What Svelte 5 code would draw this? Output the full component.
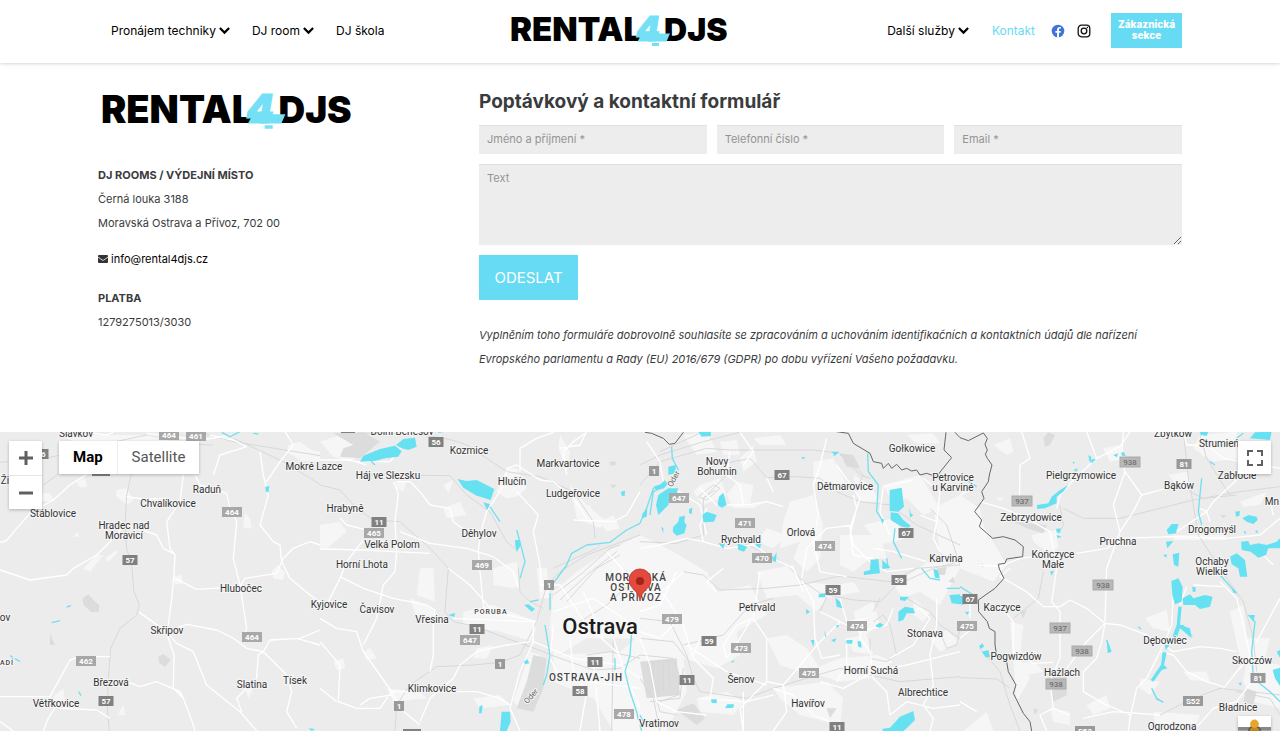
<script>
  const fields = [
    { id: 'name', label: 'Jméno a příjmení *', type: 'text' },
    { id: 'phone', label: 'Telefonní číslo *', type: 'tel' },
    { id: 'email', label: 'Email *', type: 'email' }
  ];

  // Each tile covers 960 x 918 drawing units, placed side by side.
  const tiles = [
    {
      x: 0,
      town: [
        'M350 195L380 190 400 225 380 240 348 212Z', 'M230 170L255 160 262 185 240 188Z', 'M815 440L835 420 855 445 848 465 820 460Z',
        'M865 60L900 50 935 75 960 80V110L900 105 860 80Z', 'M735 265L750 280 755 310 730 308Z', 'M520 455L545 450 548 475 525 480Z',
        'M315 400L350 375 355 380 325 412Z', 'M250 430L290 390 310 390 270 440Z', 'M218 335L232 322 240 335Z', 'M165 810L190 790 195 830 150 850Z',
        'M352 870L372 840 375 870Z', 'M180 30H430L560 60 400 90 240 60Z', 'M735 790L760 790 745 820Z', 'M100 205L150 205 165 228 100 230Z'
      ],
      wood: ['M248 520L265 508 285 530 298 540 296 560 275 562 250 540Z', 'M475 695L490 687 512 705 495 725 478 715Z', 'M150 625L158 645 165 660 150 660Z'],
      rail: ['M600 22L700 50 960 92', 'M700 40L850 110 960 178', 'M0 112Q150 108 300 60L440 30', 'M130 180L240 100 400 50 640 60', 'M398 130L380 210 375 300 380 370 395 420 402 500 418 540 410 570 360 610 332 670 325 760 322 850 328 918'],
      road: [
        'M0 352L18 348 50 310 90 265 160 225 210 180 250 155 290 120', 'M0 435L90 465 200 450 220 430 290 390 330 350 375 300', 'M380 215L430 222 500 220',
        'M550 150L540 230 500 290 510 370 525 390 522 450 515 520 505 600', 'M525 460L590 493 720 485 735 460 830 445 850 400 880 370 930 350 960 360',
        'M380 300L470 330 490 370 520 385', 'M418 562L500 620 530 655 580 680 620 780 720 860 770 918', 'M500 620L560 598 650 615 700 640 740 670 790 680 810 645 900 640 960 615',
        'M585 150L600 180 680 205 690 250 710 290 700 400 720 480 740 610 730 640', 'M780 80L790 150 805 210 780 300 820 350 840 360 845 410 870 460 930 510 960 530',
        'M640 150L660 90 740 65 700 45 630 30', 'M855 20L880 60 840 110 800 170', 'M500 625L522 690 520 790 550 820 580 900 585 918', 'M0 815H150L180 760 210 705 240 695 330 695',
        'M150 815L180 850 290 855 330 880', 'M170 840L145 880 130 918', 'M380 770L420 785 470 770 540 800 550 820', 'M790 680L775 690 770 760 710 820 725 860', 'M790 680L860 750 875 800 860 860 890 910',
        'M440 25L600 45 700 30', 'M0 890L40 918', 'M260 22L320 30 340 22', 'M890 640L960 660'
      ],
      river: ['M665 22L690 35 720 20', 'M155 593L180 587', 'M200 546L213 542', 'M30 692L60 710', 'M760 25L775 27', 'M236 800L243 812'],
      lake: ['M796 185L808 183 805 203 797 198Z', 'M925 910L945 912 935 918Z'],
      border: []
    },
    {
      x: 320,
      town: [
        'M0 50L60 30 110 20 170 60 90 110 40 95Z', 'M370 180L400 165 385 205Z', 'M560 130L590 130 620 190 590 215 560 220 530 200Z', 'M520 430L590 410 600 480 580 490 520 480Z', 'M430 560L520 540 650 590 640 650 540 620 430 600Z',
        'M300 430L340 430 345 530 290 510Z', 'M370 250L420 230 440 270 380 280Z', 'M750 180L800 240 860 290 840 310 770 280Z', 'M650 430L680 430 690 520 660 520Z', 'M700 500L770 440 860 380 960 330V640L800 640 700 700 690 600Z',
        'M720 30L750 80 740 140 715 70Z', 'M840 290L880 270 900 310 860 320Z', 'M770 250L810 240 830 280 780 290Z', 'M130 680L150 670 170 700 140 705Z', 'M40 710L70 700 75 730 50 735Z', 'M270 520L340 550 345 590 290 580Z',
        'M460 820L540 810 570 840 480 850Z', 'M200 790L300 800 320 820 220 830Z', 'M700 690L900 680 960 630V918H880L820 820 700 770Z', 'M0 300L60 290 80 320 20 370 0 370Z', 'M225 170L260 170 250 200 230 190Z', 'M630 680L660 690 640 760 600 850 580 830Z', 'M470 670L520 660 500 700 460 700Z'
      ],
      wood: ['M40 25L130 22 180 50 120 100 60 95 70 70 100 60Z', 'M640 690L680 700 670 790 640 860 590 850 620 770Z', 'M868 112L885 108 888 120 872 122Z', 'M870 180L892 178 880 190Z'],
      rail: [
        'M110 25Q350 20 440 60L560 140 660 155 760 200 820 290 825 340', 'M140 150L390 152 440 210 510 260 560 350 595 380', 'M0 180L60 195 110 250 160 285 240 290 330 370 385 430 375 560 400 590 470 605 560 640 630 665',
        'M225 918L230 840 270 780 350 725 460 720 540 712 600 690 650 590 680 480 720 440 800 390 960 330', 'M595 430L600 500 630 530 670 550', 'M700 510L780 450 870 370 900 360', 'M720 525L800 450 890 380',
        'M740 530L830 430 900 390', 'M630 665L720 700 820 735 900 730 960 690', 'M780 590L860 540 960 450', 'M800 690L870 680 960 700', 'M880 640L875 918', 'M700 430L830 370 840 360'
      ],
      road: [
        'M220 170L235 205 225 290 230 380 225 440', 'M230 170L270 170 300 200 330 240 390 250 400 290 440 320', 'M110 110L210 110 250 60', 'M0 105L90 105 140 120', 'M560 140L545 190 500 260 480 330 475 380 480 440 490 540 500 570',
        'M240 320L330 355 440 370 520 395 580 440 595 490', 'M560 130L590 120 660 165 700 170 760 220 800 280', 'M590 200L655 270 640 320 660 420 665 500', 'M600 140L600 70 650 40 700 22', 'M740 150L730 80 760 50 800 22',
        'M60 280L80 300 160 320', 'M0 372L130 375 330 385', 'M130 345L80 410 60 460 20 540', 'M60 455L130 490 220 520 320 540 345 555 340 600', 'M225 440L190 480 170 580 130 660', 'M0 580L50 610 110 620 130 680 180 750 215 800 240 850 300 900',
        'M215 800L330 800 470 800 540 820 570 840', 'M340 600L340 690 330 740', 'M300 890L330 820 400 760 420 720 470 680 560 660 630 650', 'M385 430L450 480 520 560 650 590', 'M400 580L640 590', 'M640 590L640 650 600 740 570 850 600 918', 'M800 20L780 60 720 70',
        'M960 200L920 270 880 290 760 285', 'M660 480L720 480 800 600 900 690', 'M700 560L820 520 940 600', 'M860 380L950 480', 'M880 400L960 500', 'M640 650L760 700 900 720 960 760', 'M750 640L760 740 800 800 780 918', 'M700 600L690 700 720 760 800 770 960 790',
        'M820 700L840 918', 'M0 650L60 720 55 830 110 850 180 850 215 800', 'M0 790L50 830', 'M120 840L150 820 215 810', 'M790 500L850 640', 'M880 640L920 760 960 850'
      ],
      river: ['M590 315L605 370 615 410 600 460', 'M510 245L540 290', 'M960 295L920 315 870 352 800 360 755 385 740 420 700 475', 'M690 505L690 555', 'M675 600L690 690 680 750 670 780', 'M935 620L930 690 915 740 930 800 950 860 955 885', 'M885 700L885 735', 'M630 530L655 525', 'M150 105L165 120', 'M355 22L368 20'],
      lake: ['M120 110L130 92 180 72 225 62 245 78 235 95 195 100 165 108Z', 'M228 60L250 42 285 38 290 65 265 75 245 70Z', 'M412 162L440 168 470 165 523 192 512 225 470 212 430 188Z', 'M490 232L510 238 502 255Z', 'M585 345L600 345 602 362 590 380 586 362Z', 'M613 540L625 538 645 552 635 560Z', 'M903 200L915 197 914 213 905 212Z', 'M478 845L488 840 485 865 477 865Z', 'M545 860L570 860 572 890 560 918H540Z', 'M385 570L405 564 403 576Z', 'M612 710L622 703 628 715 615 718Z'],
      border: []
    },
    {
      x: 640,
      town: [
        'M130 30L200 20 230 80 170 90Z', 'M180 180L240 160 260 210 190 240 160 200Z', 'M300 100L340 60 350 110 310 140Z', 'M290 170L340 180 330 240 380 230 340 250 280 250 260 210Z', 'M450 230L520 210 550 300 540 400 500 440 460 400 480 350 420 370 430 290Z', 'M0 330L100 380 200 440 230 500 330 480 380 570 290 620 300 690 230 730 130 700 0 640Z',
        'M0 630L100 650 130 690 140 800 80 918H0Z', 'M350 440L460 420 480 470 590 480 640 470 660 500 560 520 530 560 470 510 380 520Z', 'M520 110L580 100 620 180 570 200 520 170Z', 'M600 330L720 330 740 400 690 400 640 440 600 420Z', 'M730 180L840 150 900 250 850 270 800 220 760 240Z',
        'M820 440L880 400 960 370V430L900 540 840 500 790 520 760 480Z', 'M380 640L440 630 500 670 540 730 480 740 420 720Z', 'M500 740L600 700 710 690 760 710 690 760 600 770Z', 'M400 790L560 770 610 820 600 900 480 870 420 820Z', 'M170 820L260 800 310 830 280 870 180 860Z', 'M640 560L700 530 720 600 660 640Z', 'M880 250L960 210V430L900 380Z',
        'M620 640L680 630 700 690 640 680Z', 'M820 520L870 560 850 590 820 570Z', 'M380 310L440 330 400 370 350 350Z', 'M240 50L290 45 300 90 250 90Z', 'M670 300L760 280 800 340 720 360Z', 'M640 150L690 180 720 230 660 230Z', 'M190 620L260 600 300 680 240 700 200 680Z', 'M870 640L920 615 958 650 900 680Z', 'M340 40L420 30 440 60 360 60Z', 'M800 30L880 25 900 55 830 55Z'
      ],
      wood: ['M110 855L160 835 195 880 170 900Z', 'M0 710L110 700 120 810 20 820Z', 'M890 430L920 425 915 450 895 450Z', 'M600 85L640 90 660 130 620 125Z', 'M925 470L940 455 945 475Z', 'M560 850L590 850 570 880Z'],
      rail: [
        'M0 120L60 90 190 50 300 22', 'M0 180L60 110 200 70 270 75 520 75 600 85 660 150 690 160', 'M230 120L330 100 380 158 470 155 540 160 590 200 660 230 750 240 830 300 960 360', 'M0 350L110 355 190 330 190 220 260 150', 'M300 350L390 390 440 420 485 465 540 505 640 525 720 530 770 480 880 430 960 410',
        'M130 440L190 450 240 495 380 490 480 480 590 455 620 455 750 470 830 430 960 420', 'M130 660L180 648 250 630 330 540 400 520', 'M0 580L90 590 140 690 160 760 180 800 320 820 400 790 600 730 780 770 960 755', 'M800 520L870 560 900 600 960 640', 'M10 735L30 710 100 705 115 740 115 810 60 830',
        'M40 710V800', 'M55 710V805', 'M70 708V800', 'M85 708L90 790', 'M30 830L120 820 130 730', 'M20 720L60 860 110 870', 'M0 760L40 820 60 918', 'M175 215L220 180 240 190 200 225 175 215', 'M190 220L225 195', 'M0 690L100 700', 'M185 22L60 80', 'M0 640L100 650 140 700',
        'M600 90L630 95 640 120 670 150 660 170', 'M700 590L730 570 750 600 770 690 740 710 690 700 690 640', 'M900 620L920 670 950 660 960 610', 'M560 515L540 560 580 580', 'M870 250L920 300 960 420', 'M720 520L700 560'
      ],
      road: [
        'M0 370L60 360 140 340 190 350 260 370 340 360 400 400', 'M20 50L60 110 70 170 180 240 200 330', 'M180 190L230 240 320 240 380 230 430 245', 'M270 80L260 150 300 180 310 240', 'M380 158L400 200', 'M560 40L540 120 520 180 535 270 520 350 540 440 620 455', 'M200 250L180 300 190 350', 'M640 210L650 250 630 330 640 390 700 400',
        'M590 120L660 220 630 310 640 360 700 420 740 440 820 430', 'M640 300L560 310 500 370 485 460', 'M485 465L520 530 525 640 545 700 600 690', 'M360 440L350 510 340 580 290 600 250 660 260 700', 'M400 400L460 430 490 500', 'M340 580L380 640 380 770 300 850 310 918', 'M380 770L430 780 540 650 600 590', 'M665 580L660 640 690 680 700 760 740 800 750 870',
        'M960 680L880 700 800 720 700 740 610 790 540 770', 'M400 790L460 810 520 870 570 890', 'M0 450L80 520 130 600 160 700 220 760 210 820', 'M130 440L80 490 0 520', 'M250 430L200 470 230 500', 'M140 660L200 700 260 740 380 780', 'M540 560L660 620 740 600 760 550', 'M890 520L890 600 870 690 880 780 850 840 880 880 870 918',
        'M840 270L890 290 880 340 900 380', 'M700 370L760 380 860 410', 'M820 165L730 185 720 260 750 330', 'M850 160L900 200 890 290', 'M0 640L30 720 50 830 110 860 200 870', 'M180 640L160 690', 'M600 520L620 590 680 580', 'M960 840L880 850 800 830 750 870', 'M0 560L60 540 110 440', 'M260 700L300 640 330 590', 'M620 640L620 720 590 770',
        'M300 22L340 80 310 120', 'M100 600L60 640 0 620', 'M180 820L320 830 400 810', 'M310 800V918', 'M430 780L440 860 400 918', 'M750 700L820 660 870 580 840 550 800 560'
      ],
      river: ['M95 65L97 100 115 135 90 170 40 190 20 250 0 295', 'M683 85L685 140 715 180 710 260 730 290', 'M765 310L760 350 785 400', 'M845 430L870 460 900 465', 'M920 490H960', 'M740 400L745 430', 'M0 870L15 900', 'M0 900L5 918', 'M85 175L40 200 30 270'],
      lake: [
        'M85 125L108 120 105 145 85 150Z', 'M175 20H213L212 33 185 35Z', 'M40 185L62 178 75 165 80 180 72 190 50 196Z', 'M55 210L85 190 115 190 110 205 90 215 85 240 55 270 48 240Z', 'M8 265L22 250 20 275 5 280Z', 'M237 215L250 203 260 240 245 248 233 240Z', 'M187 270L200 260 230 270 222 290 190 292Z', 'M100 305L115 290 118 275 135 272 133 290 140 300 133 325 110 332 98 320Z', 'M148 252L157 248 155 268 147 264Z', 'M63 305L70 310 70 325Z',
        'M235 355L255 355 250 372Z', 'M292 355L322 365 312 380 295 375Z', 'M345 345L365 350 360 370 348 362Z', 'M395 390L400 398 410 382 408 410 398 408Z', 'M749 195L785 188 792 245 775 260 749 258Z', 'M752 262L775 265 790 285 812 302 805 308 785 305 752 285Z', 'M808 247L812 265 820 270 810 278Z', 'M484 95L498 98 488 103Z', 'M575 80L597 80 585 92Z', 'M671 440L690 435 692 405 715 402 720 445 672 450Z', 'M727 405L752 428 727 432Z',
        'M537 508L555 505 556 517 535 517Z', 'M586 518L600 530 607 550 590 545Z', 'M497 552L510 560 500 568Z', 'M775 590L775 560 795 545 820 550 825 565 800 565 790 585Z', 'M780 515H807L795 528 780 525Z', 'M708 600L720 593 732 600 720 608 708 605Z', 'M552 615L560 635 556 635Z', 'M573 645L590 640 583 652Z', 'M620 645H638L636 657 618 655Z', 'M652 648L663 650 665 668 655 665Z', 'M512 645L523 645 520 665Z',
        'M213 823L230 823 230 835 215 833Z', 'M262 838L282 838 280 848 255 850Z', 'M780 875L820 858 825 885 800 910 790 918H730L725 912 750 908Z', 'M880 432L893 435 900 460 885 458Z', 'M928 510L960 508V538L935 535Z', 'M588 600H597L592 610Z', 'M590 90L575 92Z', 'M273 710L285 705 278 713Z', 'M722 283H732L728 297Z'
      ],
      border: ['M15 22L35 25 70 40 88 58 105 55 130 22', 'M590 20L625 25 640 55 690 85 700 110 725 115 730 130 745 115 755 130 770 118 785 135 800 130 815 138 830 135 840 150 860 145 890 155 905 135 935 98 912 75 918 22', 'M945 22L960 38']
    },
    {
      x: 960,
      town: [
        'M0 210L60 250 70 300 140 420 100 470 0 430Z', 'M215 330L290 315 295 370 260 380 220 350Z', 'M100 60L150 40 160 80 140 90Z', 'M430 70L480 60 500 100 450 110Z', 'M720 30L830 20 840 100 760 110 700 70Z', 'M640 330L800 330 800 345 640 345Z', 'M555 580L620 555 630 620 580 610Z', 'M810 560L850 540 860 640 930 640 910 720 840 700Z', 'M150 590L190 600 180 700 210 760 170 830Z',
        'M670 740L740 740 750 770 690 765Z', 'M380 840L440 810 450 850 400 870Z', 'M540 760L600 770 570 810 540 790Z', 'M840 230L920 200 900 240 850 245Z', 'M700 60L740 60 730 95Z', 'M580 860L720 870 700 918H590Z', 'M10 918L80 860 100 918Z', 'M270 850L330 860 330 900 280 890Z', 'M860 700L960 720V850L880 830 850 770Z', 'M170 710L230 715 250 740 200 750Z', 'M110 220L130 215 120 230Z', 'M625 150L680 140 690 170 650 180Z'
      ],
      wood: ['M250 40L265 22 285 30 270 60 255 65Z', 'M260 760L320 740 320 810 280 830Z', 'M860 790L890 800 880 840 850 830Z', 'M160 290L260 300 250 325 200 310Z', 'M220 850L235 855 225 870Z', 'M60 415L72 418 68 428Z', 'M780 270L800 270 790 280Z', 'M180 560L200 555 190 580Z'],
      rail: ['M310 250L370 280 480 280 700 225 840 200 960 185', 'M670 20L690 200 730 220 830 210', 'M720 30L740 100 790 180 810 210', 'M0 758L110 762 150 790', 'M690 180L715 330 780 430 850 530 880 640 890 740', 'M600 870L700 820 780 790 960 810', 'M60 670L120 740 150 840 180 918', 'M250 440L235 520 160 580', 'M300 240L310 300 300 320', 'M830 800L930 820 960 870'],
      road: [
        'M185 20L210 100 180 120 178 235', 'M380 20L410 100 350 155 300 210 290 250', 'M60 230L130 250 200 280 270 320 280 370 290 430', 'M490 20L485 100 495 140 460 240 480 320 440 430 435 590', 'M495 140L545 210 520 260 480 320', 'M545 210L620 190 700 180', 'M350 385L440 370 490 340 630 335 800 340 900 330 960 280', 'M0 210L40 190',
        'M150 430L120 455 200 500 250 545 300 545 330 525 380 550 435 595 480 600 560 630 640 680 720 665 780 670 830 680', 'M290 430L275 530 300 560 300 700 270 770 280 850 330 870', 'M435 595L380 650 320 730', 'M435 595L425 650 410 700 370 740 370 800 430 835 510 870', 'M410 100L480 65 510 20', 'M30 530L30 580', 'M670 20L680 60 740 60 790 100 960 130', 'M830 165L760 230 740 260 680 300 650 320', 'M720 250L740 260 750 290',
        'M600 680L560 760 530 790 510 880 505 918', 'M600 680L640 690 680 740 740 770 790 785', 'M640 500L635 600 600 680', 'M680 485L660 540', 'M700 480L790 485', 'M120 540L160 590 160 680 220 715 280 712', 'M280 850L240 870 260 918', 'M370 880L460 860 600 870', 'M780 470L830 520 850 600 870 690 790 790', 'M870 700L830 740 790 790', 'M890 650L960 520', 'M930 230L940 270', 'M0 830L50 860', 'M0 640L50 600',
        'M60 420L120 425 180 400 220 395', 'M940 420L900 380', 'M890 750L830 830 760 850 700 918'
      ],
      river: ['M0 485L40 510', 'M725 160L715 260 725 300', 'M865 570L885 590 875 680 880 760 930 800 960 830', 'M780 450L830 505', 'M750 110L765 120', 'M20 165L50 185', 'M535 605L543 612', 'M575 790L590 820 610 832', 'M830 40L850 25', 'M440 645L450 680'],
      lake: [
        'M885 22L935 20 930 45 870 40Z', 'M720 20H745L740 33 722 30Z', 'M460 90L475 85 470 97Z', 'M484 82H492L497 93 485 92Z', 'M385 90L393 95 395 115 388 108Z', 'M395 103L408 102 396 115Z', 'M338 110L345 112 340 117Z', 'M230 240L265 235 275 215 300 195 325 180 310 200 290 215 290 235 255 250 232 252Z', 'M288 312L302 310 300 325 290 322Z', 'M290 330L305 335 292 340Z',
        'M270 440L282 437 275 452Z', 'M620 315L635 297 655 297 648 325 625 328Z', 'M618 350L640 348 622 370Z', 'M638 388L658 383 655 425 642 420Z', 'M609 390L620 388 620 398Z', 'M826 260L840 258 838 272 828 275Z', 'M847 280L865 270 890 275 893 285 880 297 860 290Z', 'M843 350L865 348 870 360 895 355 920 360 950 350 960 340V370L925 370 918 390 895 398 872 380 845 375Z',
        'M810 395L830 385 855 405 862 455 840 455 835 430 815 418Z', 'M634 468L655 460 668 485 665 530 645 538 637 510Z', 'M668 520L690 508 700 520 735 510 758 515 750 545 720 552 705 540 670 540Z', 'M697 485L707 487 707 500H698Z', 'M655 545L665 545 660 600 690 610 695 640 660 610 650 640 637 635 650 600Z', 'M608 680L620 683 612 720 622 730 605 735 580 770 572 765 603 720Z', 'M613 660L628 660 618 675Z', 'M575 785L590 820 612 832 590 825Z', 'M655 600L670 600 700 635 670 615Z',
        'M57 663L68 655 72 665 62 672Z', 'M65 680L85 675 90 695 78 698Z', 'M440 643L448 660 455 680 443 685Z', 'M0 512L15 515 10 540 0 537Z', 'M938 735L960 728V783L945 760Z', 'M950 680L960 675V698Z', 'M835 775L845 772 842 782Z', 'M850 320L857 318V328Z', 'M885 318L893 316 892 326Z', 'M15 560H28L22 570Z', 'M340 135L353 130 350 140Z', 'M868 570L885 570 880 590Z', 'M813 485L830 505 820 503Z'
      ],
      border: ['M0 38L25 47 70 24 82 40 75 58 82 75 76 88 82 100 96 120 88 150 85 170 65 200 72 220 44 260 65 285 58 305 98 340 130 335 165 345 190 365 188 395 140 402 135 415 115 418 118 432 132 460 105 490 55 525 56 560 82 590 88 610 105 620 105 660 110 690 140 710 145 740 168 780 160 805 190 865 210 890 215 918']
    }
  ];

  const places = [
    ['Slavkov', 76, 437], ['Mokré Lazce', 314, 470], ['Ži', 5, 484], ['Raduň', 207, 493], ['Chvalíkovice', 168, 507], ['Stáblovice', 53, 517], ['Hradec nad', 124, 529], ['Moravicí', 124, 539],
    ['Hlubočec', 241, 592], ['Kyjovice', 329, 608], ['Skřipov', 167, 634], ['ov', 5, 621], ['Březová', 111, 686], ['Slatina', 252, 688], ['Tísek', 295, 684], ['Větřkovice', 56, 707],
    ['Dolní Benešov', 402, 435], ['Kozmice', 469, 454], ['Háj ve Slezsku', 388, 479], ['Markvartovice', 568, 467], ['Hlučín', 512, 485], ['Ludgeřovice', 573, 497], ['Hrabyně', 345, 512], ['Děhylov', 479, 537],
    ['Velká Polom', 392, 548], ['Horní Lhota', 362, 568], ['Čavisov', 377, 613], ['Vřesina', 432, 623], ['Klimkovice', 432, 692], ['Novy', 717, 465], ['Bohumin', 717, 475], ['Dětmarovice', 845, 490],
    ['Gołkowice', 912, 452], ['Petrovice', 953, 481], ['u Karviné', 953, 491], ['Rychvald', 741, 543], ['Orlová', 801, 536], ['Karvina', 946, 562], ['Petřvald', 757, 611], ['Stonava', 925, 637],
    ['Horní Suchá', 871, 674], ['Albrechtice', 923, 696], ['Šenov', 741, 683], ['Havířov', 808, 707], ['Vratimov', 659, 727], ['Zbytków', 1173, 437], ['Strumień', 1219, 447], ['Pielgrzymowice', 1081, 479],
    ['Bąków', 1179, 489], ['Zabłocie', 1237, 479], ['Mn', 1272, 505], ['Zebrzydowice', 1031, 521], ['Drogomyśl', 1212, 533], ['Pruchna', 1118, 545], ['Kończyce', 1053, 558], ['Małe', 1053, 568],
    ['Ochaby', 1212, 565], ['Wielkie', 1212, 575], ['Kaczyce', 1002, 611], ['Dębowiec', 1165, 644], ['Pogwizdów', 1016, 660], ['Hażlach', 1062, 676], ['Skoczów', 1252, 664], ['Bładnice', 1238, 711], ['Ogrodzona', 1172, 730]
  ];

  const shields = [
    ['464', 169, 435, 'minor'], ['461', 196, 436, 'minor'], ['46', 41, 454, 'major'], ['464', 232, 512, 'minor'], ['57', 130, 560, 'major'], ['464', 252, 637, 'minor'], ['462', 86, 661, 'minor'], ['57', 106, 701, 'major'],
    ['56', 436, 442, 'major'], ['11', 379, 522, 'major'], ['465', 374, 533, 'minor'], ['469', 482, 565, 'minor'], ['1', 549, 585, 'motor'], ['11', 477, 629, 'major'], ['647', 470, 640, 'minor'],
    ['1', 500, 664, 'motor'], ['1', 399, 706, 'motor'], ['11', 595, 662, 'major'], ['58', 580, 691, 'major'], ['478', 624, 714, 'minor'], ['1', 654, 471, 'motor'], ['647', 679, 498, 'minor'], ['67', 782, 475, 'major'],
    ['471', 745, 523, 'minor'], ['474', 825, 546, 'minor'], ['470', 762, 558, 'minor'], ['67', 906, 533, 'major'], ['59', 833, 590, 'major'], ['59', 899, 580, 'major'], ['474', 857, 626, 'minor'], ['479', 672, 619, 'minor'],
    ['59', 709, 641, 'major'], ['473', 741, 648, 'minor'], ['475', 809, 673, 'minor'], ['11', 687, 680, 'major'], ['11', 837, 727, 'major'], ['67', 970, 599, 'major'], ['475', 967, 626, 'minor'], ['938', 1130, 462, 'local'],
    ['81', 1184, 464, 'motor'], ['937', 1022, 501, 'local'], ['938', 1103, 585, 'local'], ['937', 1060, 628, 'local'], ['938', 1082, 651, 'local'], ['938', 1056, 684, 'local'], ['81', 1258, 678, 'motor'], ['S52', 1193, 701, 'motor'], ['S52', 1085, 731, 'motor']
  ];

  const shieldWidth = (code) => 5 + code.length * 5;
</script>

{#snippet logo()}
  <svg class="logo-art" viewBox="0 0 215 32" role="img" aria-label="RENTAL4DJS">
    <text x="-1" y="26" font-size="33">RENTAL</text>
    <text x="153" y="26" font-size="32">DJS</text>
    <path class="accent" d="M131 18.500H159L155.500 26.500H126.500Z" />
    <text class="four" x="125" y="26" font-size="34">4</text>
    <rect class="accent" x="141" y="28" width="7" height="3" />
  </svg>
{/snippet}

{#snippet chevron()}
  <svg class="chevron" viewBox="0 0 10 8" aria-hidden="true"><path d="M.8 1.800L5 5.900 9.200 1.800" /></svg>
{/snippet}

<div class="page">
  <header>
    <div class="bar wrap">
      <nav class="left">
        <a href="#technika">Pronájem techniky {@render chevron()}</a>
        <a href="#room">DJ room {@render chevron()}</a>
        <a href="#skola">DJ škola</a>
      </nav>
      <a class="brand" href="#home">{@render logo()}</a>
      <nav class="right">
        <a href="#sluzby">Další služby {@render chevron()}</a>
        <a class="current" href="#kontakt">Kontakt</a>
        <div class="social">
          <a href="#facebook" aria-label="Facebook">
            <svg viewBox="0 0 14 14"><circle cx="7" cy="7" r="6.3" fill="#3f74d8" /><path d="M6.1 13.2V8.7H4.4V6.9h1.7V5.5c0-1.7 1-2.6 2.5-2.6.7 0 1.3.1 1.3.1v1.5h-.8c-.8 0-1.1.5-1.1 1v1.4h1.8l-.3 1.8H8v4.5z" fill="#fff" /></svg>
          </a>
          <a href="#instagram" aria-label="Instagram">
            <svg viewBox="0 0 14 14" fill="none" stroke="#111"><rect x="1.2" y="1.2" width="11.6" height="11.6" rx="3.3" stroke-width="1.3" /><circle cx="7" cy="7" r="2.8" stroke-width="1.3" /><circle cx="10.4" cy="3.6" r=".75" fill="#111" stroke="none" /></svg>
          </a>
        </div>
        <a class="client" href="#sekce">Zákaznická sekce</a>
      </nav>
    </div>
  </header>

  <main>
    <div class="content wrap">
      <address>
        <div class="big-logo">{@render logo()}</div>
        <p><strong>DJ ROOMS / VÝDEJNÍ MÍSTO</strong><br />Černá louka 3188<br />Moravská Ostrava a Přívoz, 702 00</p>
        <p class="mail">
          <svg viewBox="0 0 10 8" aria-hidden="true"><rect width="10" height="8" rx="1" fill="#333" /><path d="M0 2.1L4.1 5Q5 5.6 5.9 5L10 2.1" fill="none" stroke="#fff" stroke-width=".8" /></svg>
          <a href="mailto:info@rental4djs.cz">info@rental4djs.cz</a>
        </p>
        <p><strong>PLATBA</strong><br />1279275013/3030</p>
      </address>

      <section>
        <h1>Poptávkový a kontaktní formulář</h1>
        <form onsubmit={(e) => e.preventDefault()}>
          <div class="fields">
            {#each fields as field}
              <input id={field.id} type={field.type} placeholder={field.label} aria-label={field.label} />
            {/each}
          </div>
          <textarea placeholder="Text" aria-label="Text"></textarea>
          <button type="submit">ODESLAT</button>
        </form>
        <p class="consent">Vyplněním toho formuláře dobrovolně souhlasíte se zpracováním a uchováním identifikačních a kontaktních údajů dle nařízení Evropského parlamentu a Rady (EU) 2016/679 (GDPR) po dobu vyřízení Vašeho požadavku.</p>
      </section>
    </div>

    <div class="map">
      <svg class="canvas" viewBox="0 432 1280 299" preserveAspectRatio="xMidYMin slice" role="img" aria-label="Ostrava">
        {#each tiles as tile}
          <g transform="translate({tile.x} 425) scale(0.33333)">
            <path class="town" d={tile.town.join('')} />
            <path class="wood" d={tile.wood.join('')} />
            <path class="rail" d={tile.rail.join('')} />
            <path class="road" d={tile.road.join('')} />
            <path class="river" d={tile.river.join('')} />
            <path class="lake" d={tile.lake.join('')} />
            <path class="border" d={tile.border.join('')} />
          </g>
        {/each}
        <path d="M341 430h14v3h-14zM92 466h18v10H92zM403 729h18v2h-18z" fill="#808080" />
        {#each shields as [code, x, y, kind]}
          <g class="shield {kind}">
            <rect x={x - shieldWidth(code) / 2} y={y - 5} width={shieldWidth(code)} height="10" />
            <text {x} y={y + 3}>{code}</text>
          </g>
        {/each}
        {#each places as [name, x, y]}
          <text class="place" {x} {y}>{name}</text>
        {/each}
        <text class="place river-name" transform="translate(676 480) rotate(-62)">Oder</text>
        <text class="place river-name" transform="translate(533 698) rotate(-48)">Oder</text>
        <text class="district small" x="491" y="614">PORUBA</text>
        <text class="district small" x="7" y="665">ADÍ</text>
        <text class="district" x="636" y="581">MORAVSKÁ</text>
        <text class="district" x="636" y="591">OSTRAVA</text>
        <text class="district" x="636" y="601">A PŘÍVOZ</text>
        <text class="district" x="586" y="681">OSTRAVA-JIH</text>
        <text class="city" x="600" y="634">Ostrava</text>
        <path d="M640 601C639 594 636 592 632 587.500A11 11 0 1 1 648 587.500C644 592 641 594 640 601Z" fill="#e34a3d" stroke="#b93328" stroke-width=".8" />
        <circle cx="640" cy="581" r="4" fill="#a3221b" />
      </svg>
      <div class="zoom">
        <button type="button" aria-label="+"><svg viewBox="0 0 16 16"><path d="M8 1v14M1 8h14" /></svg></button>
        <button type="button" aria-label="−"><svg viewBox="0 0 16 16"><path d="M1 8h14" /></svg></button>
      </div>
      <div class="types">
        <button type="button" class="active">Map</button>
        <button type="button">Satellite</button>
      </div>
      <button type="button" class="full" aria-label="Fullscreen"><svg viewBox="0 0 16 16"><path d="M1 6V1h5M10 1h5v5M15 10v5h-5M6 15H1v-5" /></svg></button>
      <button type="button" class="pegman" aria-label="Street View"><svg viewBox="0 0 34 15"><path d="M0 11H34V15H0Z" fill="#888" /><path d="M10 15Q11 10 17 9Q23 10 24 15Z" fill="#555" /><circle cx="17" cy="8" r="4.500" fill="#e5a52f" /><path d="M12 15Q12 11 17 12Q22 11 22 15Z" fill="#c98a1d" /></svg></button>
    </div>
  </main>
</div>

<style>
  :global(body) { margin: 0; background: #fff; }
  .page { min-height: 100vh; display: flex; flex-direction: column; font: 11px/24px Inter, "Open Sans", sans-serif; color: #3a3b3d; }
  * { box-sizing: border-box; }
  a { color: #000; text-decoration: none; }
  .wrap { width: min(1084px, 100% - 32px); margin: 0 auto; }
  header { background: #fff; box-shadow: 0 0 4px rgba(0, 0, 0, .25); position: relative; }
  .bar { display: grid; grid-template-columns: 413fr 215px 456fr; align-items: center; height: 63px; padding-bottom: 2px; }
  nav { display: flex; align-items: center; font-size: 12px; line-height: 16px; white-space: nowrap; }
  nav a { display: flex; align-items: center; gap: 3px; }
  .left { gap: 22px; padding-left: 13px; }
  .right { justify-content: flex-end; gap: 20px; }
  .current { color: #66dbf3; margin-left: 3px; }
  .chevron { width: 11px; height: 9px; fill: none; stroke: #000; stroke-width: 2; }
  .social { display: flex; gap: 12px; margin-left: -4px; }
  .social svg { display: block; width: 14px; height: 14px; }
  .client { display: block; width: 71px; padding: 6px 2px 7px; background: #66dbf3; color: #fff; font-size: 10px; font-weight: 800; line-height: 11px; text-align: center; white-space: normal; }
  .logo-art { display: block; width: 100%; height: auto; overflow: visible; font-family: Inter, sans-serif; font-weight: 900; fill: #000; }
  .four, .accent { fill: #74e0f5; }
  .four { font-style: italic; stroke: #74e0f5; stroke-width: 1px; }

  main { flex: 1; display: flex; flex-direction: column; }
  .content { display: grid; grid-template-columns: 381fr 703fr; padding: 26px 0 61px; }
  address { font-style: normal; padding-top: 4px; }
  .big-logo { width: 248px; margin: 0 0 33px 4px; }
  p { margin: 0; }
  strong { font-weight: 700; }
  .mail { display: flex; align-items: center; gap: 3px; margin: 12px 0 15px; }
  .mail svg { width: 10px; height: 8px; }
  h1 { margin: 0 0 10px; font-size: 19px; line-height: 26px; font-weight: 700; }
  form { display: flex; flex-direction: column; gap: 10px; align-items: flex-start; }
  .fields { display: grid; grid-template-columns: repeat(3, 1fr); gap: 10px; width: 100%; }
  input, textarea { width: 100%; border: 0; border-radius: 0; background: #ededed; box-shadow: inset 0 1px 0 #e0e0e0; padding: 0 8px; font: inherit; color: #333; outline: 0; }
  input { height: 29px; padding-bottom: 2px; }
  textarea { display: block; height: 81px; padding: 6px 8px; line-height: 16px; resize: vertical; }
  ::placeholder { color: #949494; opacity: 1; }
  form button { border: 0; background: #66dbf3; color: #fff; font: 15px/21px Inter, sans-serif; padding: 12px 0; width: 99px; }
  .consent { margin-top: 23px; font-style: italic; }

  .map { position: relative; flex: 1; min-height: 299px; overflow: hidden; background: #ececec; font-family: Roboto, sans-serif; }
  .canvas { position: absolute; inset: 0; width: 100%; height: 100%; }
  .town { fill: #f6f6f6; }
  .wood { fill: #dcdcdc; }
  .rail, .road, .river, .border { fill: none; stroke-linejoin: round; }
  .rail { stroke: #d8d8d8; stroke-width: 3; }
  .road { stroke: #fff; stroke-width: 4; }
  .river { stroke: #74dfee; stroke-width: 4; }
  .lake { fill: #66e1f2; }
  .border { stroke: #666; stroke-width: 3; }
  .place { font-size: 10px; text-anchor: middle; fill: #333; stroke: #f5f5f5; stroke-width: 2px; paint-order: stroke; }
  .river-name { font-size: 8px; fill: #666; }
  .district { font-size: 10px; font-weight: 500; letter-spacing: 1px; text-anchor: middle; fill: #444; stroke: #f8f8f8; stroke-width: 2px; paint-order: stroke; }
  .small { font-size: 7px; }
  .city { font-size: 22px; font-weight: 500; text-anchor: middle; fill: #1d1d1d; stroke: #fafafa; stroke-width: 2px; paint-order: stroke; }
  .shield text { font-size: 8px; font-weight: 700; text-anchor: middle; fill: #fff; }
  .minor rect { fill: #a8a8a8; }
  .major rect { fill: #808080; }
  .motor rect { fill: #999; }
  .local rect { fill: #b8b8b8; stroke: #aaa; stroke-width: 1; }
  .local text { fill: #707070; font-weight: 500; }
  .map button { border: 0; padding: 0; background: #fff; color: #565656; }
  .map button svg { display: block; margin: auto; width: 16px; height: 16px; fill: none; stroke: #606060; stroke-width: 3; }
  .map .full svg { stroke-width: 2; }
  .zoom, .types, .full, .pegman { position: absolute; box-shadow: 0 1px 3px rgba(0, 0, 0, .25); }
  .zoom { left: 9px; top: 9px; width: 33px; background: #fff; }
  .zoom button { display: block; width: 100%; height: 34px; }
  .zoom button + button { border-top: 1px solid #e6e6e6; }
  .types { left: 59px; top: 9px; display: flex; }
  .map .types button { font: 15px/33px Roboto, sans-serif; padding: 0 14px; }
  .map .types .active { color: #000; font-weight: 700; border-right: 1px solid #eee; }
  .full { right: 9px; top: 9px; width: 33px; height: 33px; }
  .pegman { right: 9px; bottom: 0; width: 33px; height: 15px; }
  .map .pegman svg { width: 33px; height: 15px; stroke: none; }
  @media (max-width: 900px) {
    .bar { grid-template-columns: 1fr; height: auto; padding: 12px 0; gap: 12px; }
    .brand { width: 215px; }
    nav { flex-wrap: wrap; }
    .right { justify-content: flex-start; }
    .content { grid-template-columns: 1fr; gap: 24px; }
  }
</style>
